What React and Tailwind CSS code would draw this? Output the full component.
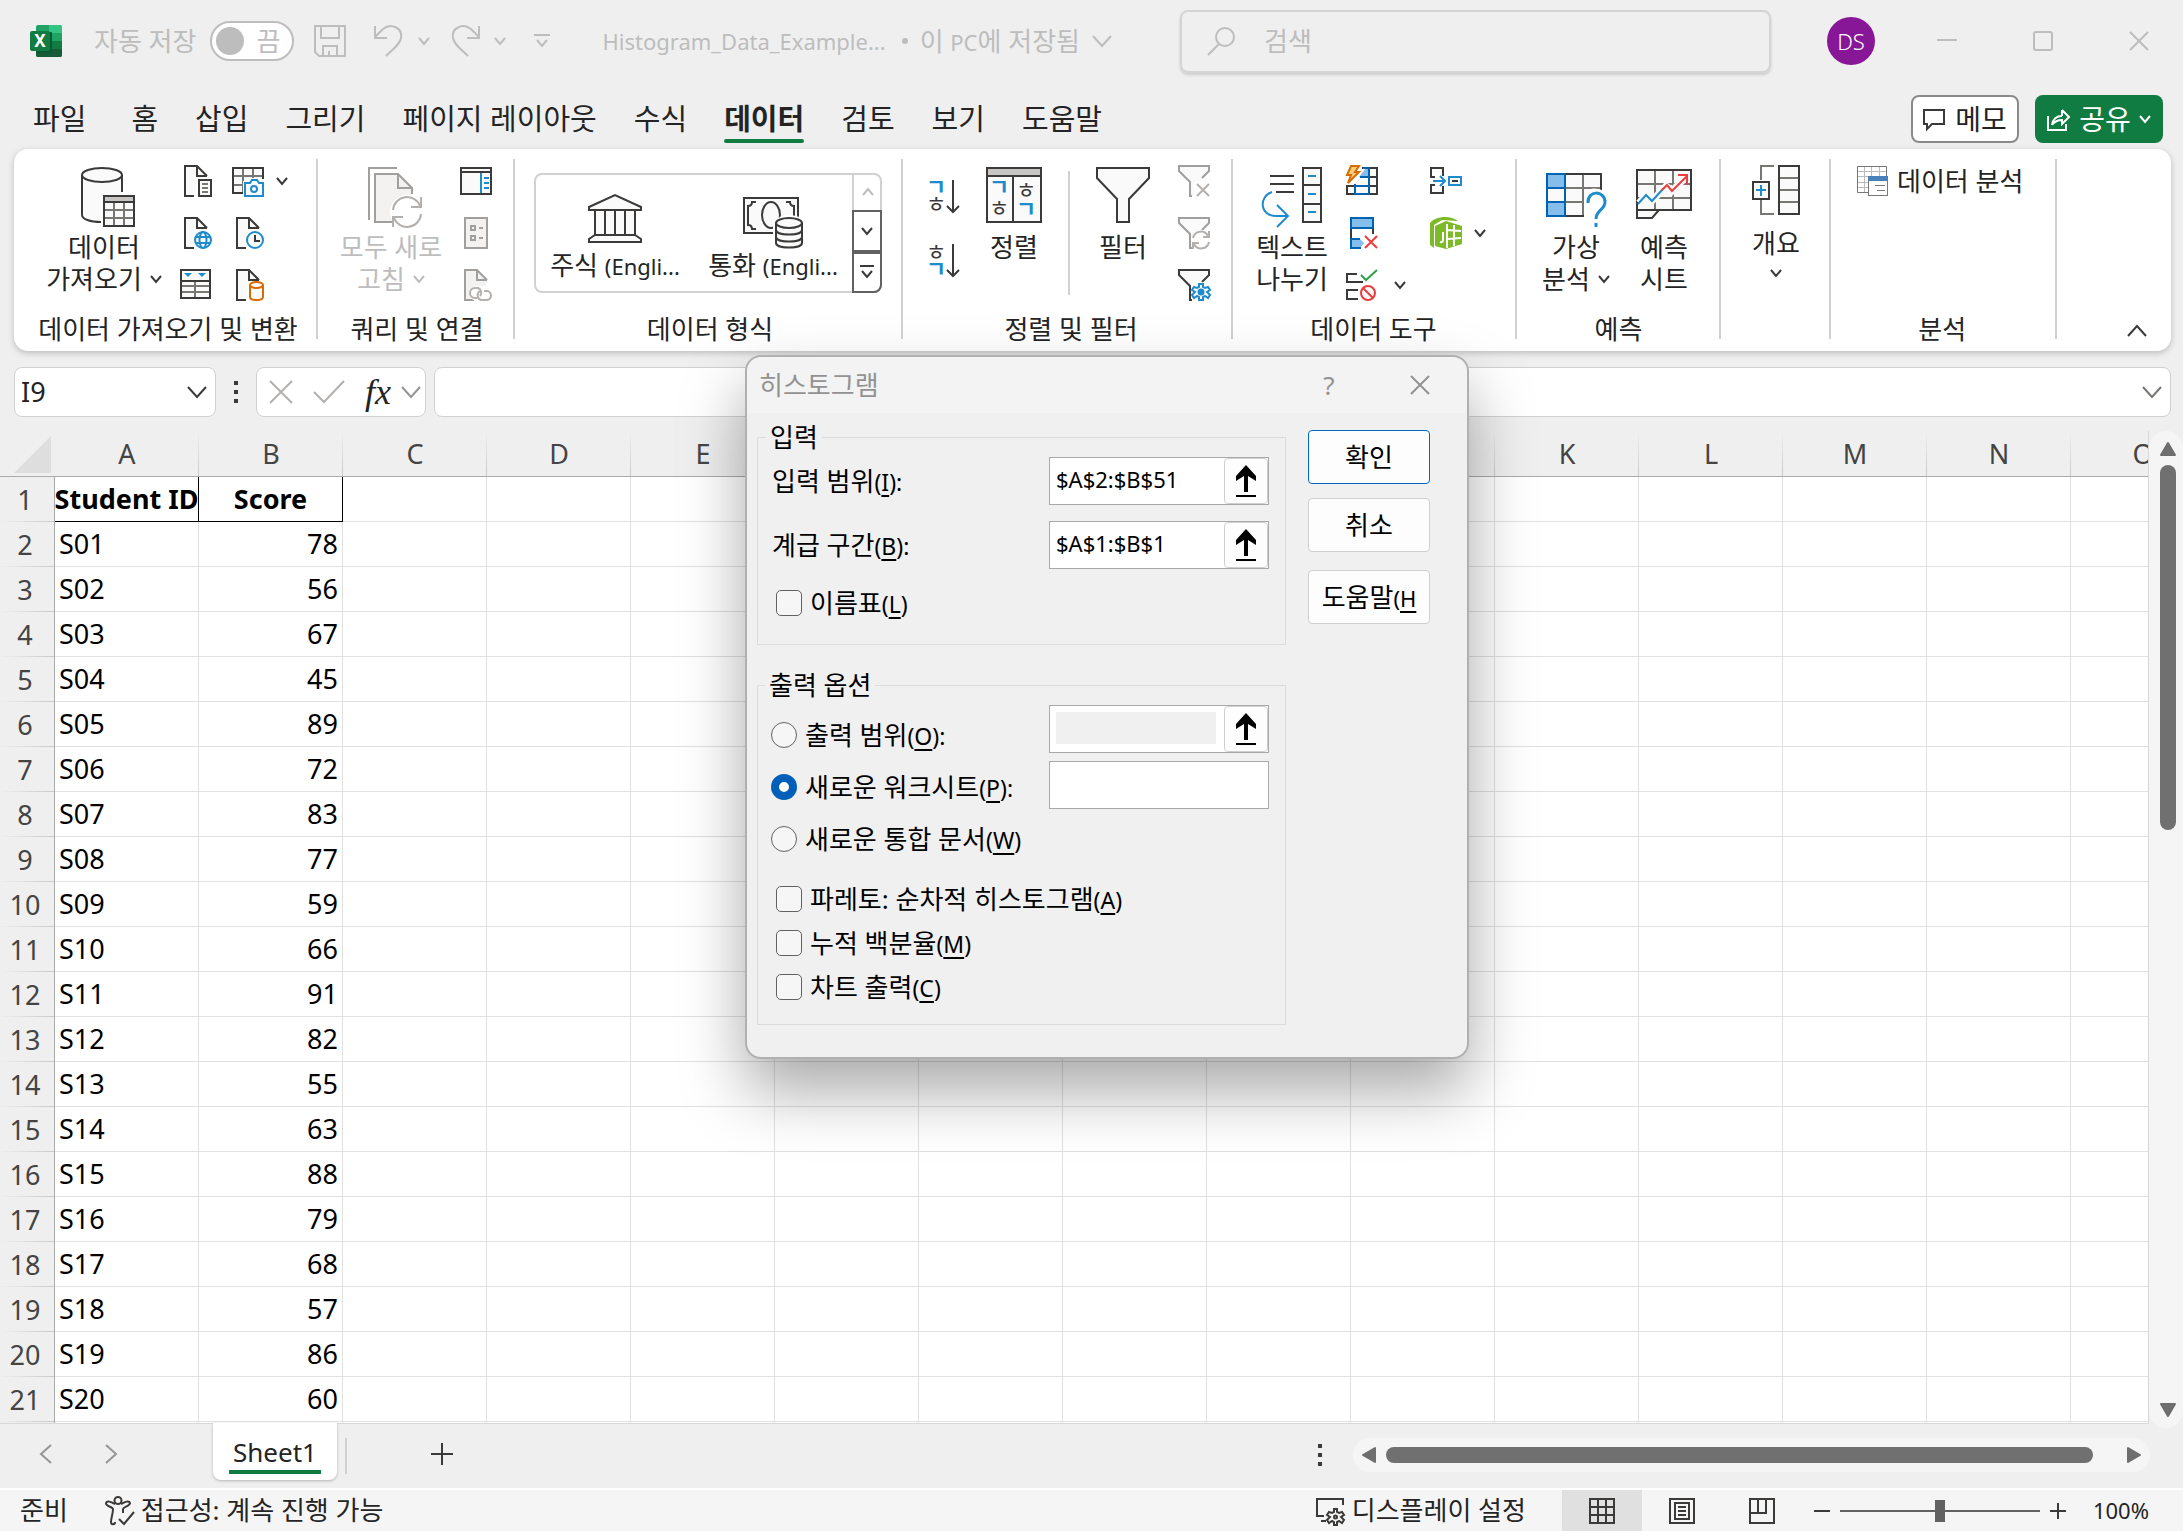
import React from 'react';

const INK = '#3b3a39';
const GREY = '#797774';
const BLUE = '#1e8bcd';
const OFF = '#a19f9d';
const PALE = '#fafafa';

function Svg({ w = 32, h = 32, stroke = INK, sw = 2, className = '', children }) {
  return (
    <svg
      width={w}
      height={h}
      viewBox={`0 0 ${w} ${h}`}
      fill="none"
      stroke={stroke}
      strokeWidth={sw}
      className={`shrink-0 overflow-visible ${className}`}
      aria-hidden="true"
    >
      {children}
    </svg>
  );
}

function Chevron({ w = 12, h = 8, stroke = INK, sw = 2, dir = 'down', className = '' }) {
  const d = {
    down: `M1 1L${w / 2} ${h - 1}L${w - 1} 1`,
    up: `M1 ${h - 1}L${w / 2} 1L${w - 1} ${h - 1}`,
    left: `M${w - 1} 1L1 ${h / 2}L${w - 1} ${h - 1}`,
    right: `M1 1L${w - 1} ${h / 2}L1 ${h - 1}`,
  }[dir];
  return (
    <Svg w={w} h={h} stroke={stroke} sw={sw} className={className}>
      <path d={d} />
    </Svg>
  );
}

const Latin = ({ children }) => <span className="text-[22px]">{children}</span>;

/* ---------- ribbon icons ---------- */

const GetDataIcon = () => (
  <Svg w={54} h={60} className="ml-2">
    <path d="M1 8V48C1 52 9 55 20 55V30H41V8" fill={PALE} stroke="none" />
    <path d="M1 8V48C1 52 9 55 20 55M41 8V25" />
    <ellipse cx="21" cy="8" rx="20" ry="7" fill={PALE} />
    <rect x="23" y="29" width="30" height="30" fill={PALE} />
    <rect x="24" y="30" width="28" height="5" fill="#c8c6c4" stroke="none" />
    <path d="M33 36V58M43 36V58M24 43H52M24 51H52" stroke={GREY} />
    <path d="M23 35H53" />
    <rect x="23" y="29" width="30" height="30" />
  </Svg>
);

function DocIcon({ children, stroke = INK, fill = PALE, body = 'M14 31H5V1H17L27 11' }) {
  return (
    <Svg stroke={stroke}>
      <path d="M5 1H17L27 11V14L14 31H5Z" fill={fill} stroke="none" />
      <path d={body} />
      <path d="M17 1V11H27" />
      {children}
    </Svg>
  );
}

const DocTextIcon = () => (
  <DocIcon>
    <rect x="16" y="13" width="16" height="19" fill="#fff" stroke="none" />
    <rect x="19" y="15" width="12" height="16" fill={PALE} />
    <path d="M22 19H28M22 23H28M22 27H28" stroke={GREY} />
  </DocIcon>
);
const DocWebIcon = () => (
  <DocIcon>
    <circle cx="23" cy="23" r="10" fill="#fff" stroke="none" />
    <g stroke={BLUE}>
      <circle cx="23" cy="23" r="8" fill={PALE} />
      <ellipse cx="23" cy="23" rx="3.5" ry="8" />
      <path d="M15 20H31M15 26H31" />
    </g>
  </DocIcon>
);
const DocClockIcon = () => (
  <DocIcon>
    <circle cx="23" cy="23" r="10" fill="#fff" stroke="none" />
    <circle cx="23" cy="23" r="8" fill={PALE} stroke={BLUE} />
    <path d="M23 18V24H28" />
  </DocIcon>
);
const DocDbIcon = () => (
  <DocIcon>
    <rect x="15" y="12" width="17" height="20" fill="#fff" stroke="none" />
    <g stroke="#d96b00">
      <path d="M18 16V28C18 32 31 32 31 28V16" fill={PALE} />
      <ellipse cx="24.5" cy="16" rx="6.5" ry="3" fill={PALE} />
    </g>
  </DocIcon>
);
const TableCameraIcon = () => (
  <Svg>
    <path d="M1 3H31V28H1Z" fill={PALE} stroke="none" />
    <path d="M2 11H30M2 20H14M11 4V28M21 4V18" stroke={GREY} />
    <path d="M12 28H1V3H31V14" />
    <path d="M11 16H17V13H28V16H32V32H11Z" fill="#fff" stroke="none" />
    <path d="M13 18H18L20 15H25L27 18H31V31H13Z" fill={PALE} stroke={BLUE} />
    <circle cx="22" cy="24" r="3" stroke={BLUE} />
  </Svg>
);
const TableFilterIcon = () => (
  <Svg>
    <rect x="1" y="1" width="29" height="28" fill={PALE} />
    <path d="M2 17H29M2 23H29M15 12V28" stroke={GREY} />
    <path d="M1 12H30" />
    <path d="M4 4H12L8 8ZM18 4H26L22 8Z" fill={BLUE} stroke="none" />
  </Svg>
);
const RefreshAllIcon = () => (
  <Svg w={54} h={60} stroke={OFF} className="ml-2">
    <path d="M29 1H1V53" />
    <path d="M7 7H30L44 21V55H7Z" fill="#f3f2f1" stroke="none" />
    <path d="M27 55H7V7H30L44 21V27" />
    <path d="M30 7V21H44" />
    <circle cx="39" cy="45" r="17" fill="#fff" stroke="none" />
    <g stroke="#b3b0ad">
      <path d="M25 43A14 14 0 0 1 52 39M53 47A14 14 0 0 1 26 51" />
      <path d="M53 30V40H43M25 60V50H35" />
    </g>
  </Svg>
);
const PaneIcon = () => (
  <Svg>
    <rect x="1" y="3" width="30" height="26" fill={PALE} />
    <path d="M1 7H31" />
    <path d="M21 8V28M24 13H29M24 18H29M24 23H29" stroke={BLUE} />
  </Svg>
);
const PropsIcon = () => (
  <Svg stroke={OFF}>
    <rect x="5" y="1" width="22" height="30" fill="#f3f2f1" />
    <rect x="11" y="9" width="4" height="4" />
    <rect x="11" y="19" width="4" height="4" />
    <path d="M19 11H23M19 21H23" />
  </Svg>
);
const LinksIcon = () => (
  <DocIcon stroke={OFF} fill="#f3f2f1">
    <rect x="10" y="17" width="22" height="15" rx="7" fill="#fff" stroke="none" />
    <path d="M17 29H15A5 5 0 0 1 15 19H18A5 5 0 0 1 20 27M24 22H26A4 4 0 0 1 27 31H21A5 5 0 0 1 20 22" stroke="#b3b0ad" />
  </DocIcon>
);
const BankIcon = () => (
  <Svg w={54} h={50}>
    <path d="M1 14L27 2L53 14V17H1Z" fill={PALE} />
    <path d="M7 18V42H47V18" fill={PALE} />
    <path d="M17 18V42M27 18V42M37 18V42" />
    <path d="M7 42H47L53 46V49H1V46Z" fill={PALE} />
  </Svg>
);
const MoneyIcon = () => (
  <Svg w={60} h={52}>
    <rect x="1" y="1" width="54" height="35" fill={PALE} />
    <path d="M13 5H9Q9 9 5 9V28Q9 28 9 32H13M43 5H47Q47 9 51 9V20" />
    <ellipse cx="28" cy="18" rx="9" ry="13" />
    <path d="M30 24Q38 18 46 18Q56 18 60 24V52H30Z" fill="#fff" stroke="none" />
    <path d="M33 26V46C33 52 59 52 59 46V26" fill={PALE} />
    <ellipse cx="46" cy="26" rx="13" ry="5" fill={PALE} />
    <path d="M33 33C33 39 59 39 59 33M33 40C33 46 59 46 59 40" />
  </Svg>
);

function Jamo({ x, y, blue, children }) {
  return (
    <text
      x={x}
      y={y}
      fontSize="22"
      fill={blue ? BLUE : INK}
      stroke="none"
      fontFamily='"Noto Sans CJK KR", sans-serif'
      fontWeight={blue ? 700 : 400}
    >
      {children}
    </text>
  );
}
const SortAscIcon = () => (
  <Svg w={34} h={40}>
    <Jamo x={-2} y={20} blue>ㄱ</Jamo>
    <Jamo x={-2} y={37}>ㅎ</Jamo>
    <path d="M25 5V37M19 31L25 37L31 31" />
  </Svg>
);
const SortDescIcon = () => (
  <Svg w={34} h={40}>
    <Jamo x={-2} y={21}>ㅎ</Jamo>
    <Jamo x={-2} y={38} blue>ㄱ</Jamo>
    <path d="M25 5V37M19 31L25 37L31 31" />
  </Svg>
);
const SortIcon = () => (
  <Svg w={56} h={56}>
    <rect x="1" y="1" width="54" height="54" fill={PALE} />
    <rect x="2" y="2" width="52" height="6" fill="#c8c6c4" stroke="none" />
    <path d="M1 9H55M27 9V55" />
    <Jamo x={3} y={28} blue>ㄱ</Jamo>
    <Jamo x={3} y={49}>ㅎ</Jamo>
    <Jamo x={30} y={31}>ㅎ</Jamo>
    <Jamo x={30} y={50} blue>ㄱ</Jamo>
  </Svg>
);
const FilterIcon = () => (
  <Svg w={54} h={56}>
    <path d="M1 1H53V11L33 32V55H21V32L1 11Z" fill={PALE} />
  </Svg>
);
function SmallFilter({ stroke = INK, children }) {
  return (
    <Svg stroke={stroke}>
      <path d="M1 1H31V6L20 17V31H12V17L1 6Z" fill={PALE} stroke="none" />
      <path d="M14 31H12V17L1 6V1H31V6L24 13" />
      {children}
    </Svg>
  );
}
const FilterClearIcon = () => (
  <SmallFilter stroke={OFF}>
    <path d="M16 17H32V32H16Z" fill="#fff" stroke="none" />
    <path d="M19 19L31 31M31 19L19 31" stroke="#b3b0ad" />
  </SmallFilter>
);
const FilterReapplyIcon = () => (
  <SmallFilter stroke={OFF}>
    <circle cx="23" cy="23" r="10" fill="#fff" stroke="none" />
    <path d="M15 21A8 8 0 0 1 30 19M31 25A8 8 0 0 1 16 27M31 14V20H25M15 32V26H21" stroke="#b3b0ad" />
  </SmallFilter>
);
const FilterAdvIcon = () => (
  <SmallFilter>
    <circle cx="23" cy="23" r="10" fill="#fff" stroke="none" />
    <g stroke={BLUE}>
      <path d="M21 15H25V18L27 19L30 18L32 21L29 23L32 26L30 29L27 27L25 28V31H21V28L19 27L16 29L14 26L17 23L14 21L16 18L19 19L21 18Z" fill={PALE} />
      <circle cx="23" cy="23" r="2.5" fill={BLUE} />
    </g>
  </SmallFilter>
);
const TextColsIcon = () => (
  <Svg w={60} h={60}>
    <path d="M8 9H32M8 17H32M14 25H32" />
    <path d="M41 1H59V55H41ZM41 18H59M41 37H59" fill={PALE} />
    <path d="M46 9H54M46 27H54M46 45H54" stroke={BLUE} />
    <path d="M10 25C-3 29 -3 49 14 49H26M15 38L26 49L15 60" stroke={BLUE} />
  </Svg>
);
const FlashFillIcon = () => (
  <Svg>
    <path d="M16 3H31V29H1V21H31M23 3V29M16 12H31" fill="none" />
    <path d="M9 29V18L18 3H23V29Z" fill={PALE} stroke="none" />
    <path d="M13 12L20 3H23V12Z" fill="#83beec" stroke="none" />
    <path d="M9 19V29H23V3H18M9 21H23M14 12H23" stroke="#0063b1" />
    <path d="M5 1H13L9 7H13L2 18L5 10H1Z" fill="#ffcd80" stroke="#d96b00" />
  </Svg>
);
const RemoveDupIcon = () => (
  <Svg>
    <path d="M5 11V22M27 11V17" />
    <rect x="5" y="1" width="22" height="10" fill="#83beec" stroke="#0063b1" />
    <path d="M14 31H5V22H14L18 26Z" fill="#83beec" stroke="none" />
    <path d="M15 31H5V22H14" stroke="#0063b1" />
    <path d="M19 19L31 31M31 19L19 31" stroke="#e93e3e" />
  </Svg>
);
const ValidationIcon = () => (
  <Svg>
    <path d="M11 5H1V13H17M12 21H1V30H12" />
    <path d="M15 6L20 11L31 1" stroke="#2fa04e" />
    <circle cx="22" cy="24" r="7" stroke="#e93e3e" fill={PALE} />
    <path d="M17 19L27 29" stroke="#e93e3e" />
  </Svg>
);
const ConsolidateIcon = () => (
  <Svg>
    <path d="M13 11V3H1V12H5M5 20H1V28H13V21" />
    <path d="M3 16H15M10 11L15 16L10 21" stroke={BLUE} />
    <rect x="19" y="12" width="12" height="8" stroke={BLUE} fill={PALE} />
    <path d="M22 16H28" />
  </Svg>
);
const DataModelIcon = () => (
  <Svg>
    <path d="M0 6C6 -1 20 -2 28 4L12 3L4 8V31L0 28Z" fill="#7dba28" stroke="none" />
    <path d="M5 9L16 4L32 9V27L16 32L5 29Z" fill="#7dba28" stroke="none" />
    <path d="M17 7V31M17 13L31 14M17 22L31 21M24 8V29" stroke="#fff" />
    <path d="M13 15V23Q13 26 10 25" stroke="#fff" />
  </Svg>
);
const WhatIfIcon = () => (
  <Svg w={60} h={60}>
    <rect x="1" y="7" width="54" height="42" fill={PALE} />
    <path d="M20 21H54M20 35H42M37 8V48" stroke={GREY} />
    <path d="M1 7H19V21H1ZM1 35H19V49H1Z" fill="#83beec" />
    <path d="M1 7H19V49H1ZM1 21H19M1 35H19" stroke="#0063b1" />
    <path d="M38 60V27Q44 20 52 22L60 24V60Z" fill="#fff" stroke="none" />
    <path d="M42 36C41 23 59 23 59 35C59 43 50 43 50 52M50 56V60" stroke={BLUE} strokeWidth="3" />
  </Svg>
);
const ForecastIcon = () => (
  <Svg w={56} h={54}>
    <path d="M1 43V51H16L23 43" fill={PALE} />
    <rect x="1" y="3" width="54" height="40" fill={PALE} />
    <path d="M19 4V42M37 4V42M2 17H54M2 31H54" stroke={GREY} />
    <path d="M3 36L10 28L16 34L30 19L36 24L50 10" stroke={PALE} strokeWidth="7" />
    <path d="M2 37L10 28L16 34L27 22" stroke={BLUE} />
    <path d="M26 23L31 18L36 24L51 9M42 8H51V18" stroke="#e93e3e" />
  </Svg>
);
const OutlineIcon = () => (
  <Svg w={48} h={52}>
    <path d="M22 1H9V15M9 35V49H22" stroke={GREY} />
    <rect x="27" y="1" width="20" height="48" fill={PALE} />
    <path d="M28 13H46M28 25H46M28 37H46" stroke={GREY} />
    <rect x="1" y="17" width="16" height="17" fill={PALE} />
    <path d="M4 25H14M9 20V31" stroke={BLUE} />
  </Svg>
);
const AnalysisIcon = () => (
  <Svg sw={1}>
    <path d="M11 27.5H.5V1.5H29.5V11" stroke={GREY} />
    <path d="M1 6.5H29M1 11.5H14M1 17.5H11M1 22.5H11M7.500 2V27M14.500 2V11M22.500 2V11" stroke="#bbb" />
    <rect x="11.500" y="11.500" width="19" height="19" fill="#fff" stroke={GREY} />
    <rect x="11" y="11" width="20" height="5" fill="#4a80ba" stroke="none" />
    <path d="M18 20.500H28M20 25.500H28" stroke={GREY} />
  </Svg>
);

/* ---------- ribbon building blocks ---------- */

function Group({ label, className = '', children }) {
  return (
    <section
      aria-label={label}
      className={`flex shrink-0 flex-col border-r-2 border-[#d1d1d1] ${className}`}
    >
      <div className="flex h-40 items-start">{children}</div>
      <div className="-mx-8 h-5 pl-1 text-center leading-5 whitespace-nowrap">{label}</div>
    </section>
  );
}

function Big({ icon, lines, arrow, off, className = '' }) {
  return (
    <button
      className={`flex shrink-0 flex-col items-center pt-2 leading-8 whitespace-nowrap ${off ? 'text-[#bdbdbd]' : ''} ${className}`}
    >
      <span className="flex h-[60px] items-start">{icon}</span>
      <span className="mt-1 flex flex-col items-center">
        {lines.map((line, i) => (
          <span key={line} className="flex items-center gap-2">
            {line}
            {arrow && i === lines.length - 1 && <Chevron stroke={off ? '#bdbdbd' : INK} />}
          </span>
        ))}
      </span>
    </button>
  );
}

function Small({ icon, name, arrow = '', off }) {
  return (
    <button aria-label={name} disabled={off} className="flex h-11 items-center">
      {icon}
      {arrow && <Chevron className={arrow} />}
    </button>
  );
}

const Stack = ({ className = '', children }) => (
  <div className={`flex shrink-0 flex-col items-start gap-2 ${className}`}>{children}</div>
);

function Ribbon() {
  return (
    <div className="mx-3.5 mr-3 flex rounded-[14px] bg-white pt-2.5 pb-3 text-[26px] text-[#242424] shadow-[0_2px_6px_rgba(0,0,0,0.22)]">
      <Group label="데이터 가져오기 및 변환" className="pr-7 pl-[30px]">
        <Big className="w-[120px]" icon={<GetDataIcon />} lines={['데이터', '가져오기']} arrow />
        <Stack className="ml-4">
          <Small name="텍스트/CSV에서" icon={<DocTextIcon />} />
          <Small name="웹" icon={<DocWebIcon />} />
          <Small name="테이블/범위에서" icon={<TableFilterIcon />} />
        </Stack>
        <Stack className="ml-5">
          <Small name="그림에서" icon={<TableCameraIcon />} arrow="ml-3" />
          <Small name="최근에 사용한 원본" icon={<DocClockIcon />} />
          <Small name="기존 연결" icon={<DocDbIcon />} />
        </Stack>
      </Group>

      <Group label="쿼리 및 연결" className="pr-[21px] pl-5">
        <Big className="w-[106px]" icon={<RefreshAllIcon />} lines={['모두 새로', '고침']} arrow off />
        <Stack className="ml-4">
          <Small name="쿼리 및 연결" icon={<PaneIcon />} />
          <Small name="속성" icon={<PropsIcon />} off />
          <Small name="연결 편집" icon={<LinksIcon />} off />
        </Stack>
      </Group>

      <Group label="데이터 형식" className="pr-[19px] pl-[19px]">
        <div className="mt-3.5 flex h-[120px] w-[348px] rounded-lg border-2 border-[#d1d1d1]">
          <button className="flex flex-1 flex-col items-center pt-[18px] leading-8 whitespace-nowrap">
            <BankIcon />
            <span className="mt-1.5">
              주식 <Latin>(Engli...</Latin>
            </span>
          </button>
          <button className="flex flex-1 flex-col items-center pt-[22px] leading-8 whitespace-nowrap">
            <MoneyIcon />
            <span>
              통화 <Latin>(Engli...</Latin>
            </span>
          </button>
          <div className="-my-0.5 -mr-0.5 flex w-[30px] flex-col">
            <button aria-label="이전" className="grid flex-1 place-items-center border-l-2 border-[#d1d1d1]">
              <Chevron dir="up" stroke="#bdbdbd" />
            </button>
            <button aria-label="다음" className="grid flex-1 place-items-center border-2 border-[#616161]">
              <Chevron />
            </button>
            <button aria-label="자세히" className="grid flex-1 place-items-center rounded-br-lg border-2 border-[#616161]">
              <Svg w={14} h={14}>
                <path d="M0 1H14M2 6L7 12L12 6" />
              </Svg>
            </button>
          </div>
        </div>
      </Group>

      <Group label="정렬 및 필터" className="pr-[21px] pl-[25px]">
        <div className="flex w-8 flex-col gap-6 pt-4">
          <button aria-label="오름차순 정렬" className="flex h-10"><SortAscIcon /></button>
          <button aria-label="내림차순 정렬" className="flex h-10"><SortDescIcon /></button>
        </div>
        <Big className="ml-[26px] w-14" icon={<SortIcon />} lines={['정렬']} />
        <div className="mt-3 ml-[26px] h-[124px] w-0.5 bg-[#d1d1d1]" />
        <Big className="ml-[26px] w-[54px]" icon={<FilterIcon />} lines={['필터']} />
        <Stack className="ml-7">
          <Small name="지우기" icon={<FilterClearIcon />} off />
          <Small name="다시 적용" icon={<FilterReapplyIcon />} off />
          <Small name="고급" icon={<FilterAdvIcon />} />
        </Stack>
      </Group>

      <Group label="데이터 도구" className="pr-[29px] pl-6">
        <Big className="w-[70px]" icon={<TextColsIcon />} lines={['텍스트', '나누기']} />
        <Stack className="ml-[19px]">
          <Small name="빠른 채우기" icon={<FlashFillIcon />} />
          <Small name="중복된 항목 제거" icon={<RemoveDupIcon />} />
          <Small name="데이터 유효성 검사" icon={<ValidationIcon />} arrow="ml-4" />
        </Stack>
        <Stack className="ml-6">
          <Small name="통합" icon={<ConsolidateIcon />} />
          <Small name="데이터 모델" icon={<DataModelIcon />} arrow="ml-3" />
        </Stack>
      </Group>

      <Group label="예측" className="pr-[27px] pl-6">
        <Big className="w-[70px]" icon={<WhatIfIcon />} lines={['가상', '분석']} arrow />
        <Big className="ml-[25px] w-14" icon={<ForecastIcon />} lines={['예측', '시트']} />
      </Group>

      <Group label="" className="pr-[29px] pl-[31px]">
        <button className="flex w-12 flex-col items-center pt-1.5 leading-8 whitespace-nowrap">
          <OutlineIcon />
          <span className="mt-2.5">개요</span>
          <Chevron className="mt-2.5" />
        </button>
      </Group>

      <Group label="분석" className="pr-8 pl-[26px]">
        <button className="flex h-11 items-center gap-2 whitespace-nowrap">
          <AnalysisIcon />
          데이터 분석
        </button>
      </Group>

      <button aria-label="리본 메뉴 축소" className="mr-6 mb-0.5 ml-auto self-end">
        <Chevron w={20} h={12} dir="up" />
      </button>
    </div>
  );
}

/* ---------- window chrome ---------- */

function TitleBar() {
  const faint = '#bdbdbd';
  return (
    <header className="flex h-[82px] shrink-0 items-center pl-[30px] text-[26px] whitespace-nowrap text-[#bdbdbd]">
      <Svg>
        <g stroke="none">
          <rect x="6" y="0" width="26" height="32" rx="2" fill="#21a366" />
          <path d="M19 0H30Q32 0 32 2V8H19Z" fill="#33c481" />
          <path d="M6 16H19V24H6Z" fill="#185c37" />
          <path d="M19 16H32V24H19Z" fill="#107c41" />
          <path d="M6 24H32V30Q32 32 30 32H8Q6 32 6 30Z" fill="#185c37" />
          <rect x="6" y="7" width="16" height="21" rx="1" fill="#0b5b30" />
          <rect x="0" y="6" width="20" height="20" rx="2" fill="#107c41" />
          <text x="10" y="22" fontSize="17" fontWeight="700" textAnchor="middle" fill="#fff">
            X
          </text>
        </g>
      </Svg>
      <span id="autosave" className="ml-8">자동 저장</span>
      <button
        role="switch"
        aria-checked="false"
        aria-labelledby="autosave"
        className="ml-3.5 flex h-10 w-[84px] items-center gap-3 rounded-full border-2 border-[#bdbdbd] bg-white pl-1"
      >
        <span className="size-7 rounded-full bg-[#bdbdbd]" />
        끔
      </button>
      <button aria-label="저장" className="ml-5">
        <Svg stroke={faint}>
          <path d="M1 1H31V31H5L1 27ZM7 1V13H25V1M9 31V21H23V31M15 31V26" />
        </Svg>
      </button>
      <button aria-label="실행 취소" className="ml-7 flex items-center gap-3.5">
        <Svg w={30} stroke={faint}>
          <path d="M1 1V13H13M1 12L9 4C18 -3 29 4 27 13C26 20 18 25 12 31" />
        </Svg>
        <Chevron stroke={faint} />
      </button>
      <button aria-label="다시 실행" className="ml-5 flex items-center gap-3.5">
        <Svg w={30} stroke={faint}>
          <path d="M29 1V13H17M29 12L21 4C12 -3 1 4 3 13C4 20 12 25 18 31" />
        </Svg>
        <Chevron stroke={faint} />
      </button>
      <button aria-label="빠른 실행 도구 모음 사용자 지정" className="ml-7">
        <Svg w={16} h={14} stroke={faint}>
          <path d="M0 1H16M3 6L8 12L13 6" />
        </Svg>
      </button>
      <button className="ml-[52px] flex items-center gap-3">
        <span className="text-[22px]">Histogram_Data_Example...</span>
        <span className="ml-1 size-1.5 rounded-full bg-[#bdbdbd]" />
        <span>
          이 <Latin>PC</Latin>에 저장됨
        </span>
        <Chevron w={20} h={12} stroke={faint} />
      </button>
      <label className="ml-auto flex h-[63px] w-[591px] items-center gap-7 rounded-lg border-2 border-[#d4d4d4] pl-6 shadow-[0_2px_3px_rgba(0,0,0,0.15)]">
        <Svg w={30} h={30} stroke={faint}>
          <circle cx="19" cy="11" r="9" />
          <path d="M13 18L2 29" />
        </Svg>
        <input
          aria-label="검색"
          placeholder="검색"
          className="w-full bg-transparent outline-none placeholder:text-[#bdbdbd]"
        />
      </label>
      <button className="ml-14 grid size-12 place-items-center rounded-full bg-[#881798] text-[22px] font-light text-white">
        DS
      </button>
      <button aria-label="최소화" className="ml-[62px]">
        <Svg w={20} h={20} stroke={faint}><path d="M0 9H20" /></Svg>
      </button>
      <button aria-label="최대화" className="ml-[76px]">
        <Svg w={20} h={20} stroke={faint}><rect x="1" y="1" width="18" height="18" rx="2" /></Svg>
      </button>
      <button aria-label="닫기" className="mr-[34px] ml-[76px]">
        <Svg w={20} h={20} stroke={faint}><path d="M1 1L19 19M19 1L1 19" /></Svg>
      </button>
    </header>
  );
}

const TABS = ['파일', '홈', '삽입', '그리기', '페이지 레이아웃', '수식', '데이터', '검토', '보기', '도움말'];

function TabRow() {
  return (
    <nav className="flex h-[67px] shrink-0 items-end pr-5 pb-1.5 pl-[33px] text-[29px] whitespace-nowrap text-[#242424]">
      <div className="flex gap-[37px]">
        {TABS.map((tab) => (
          <button
            key={tab}
            className={
              tab === '데이터'
                ? 'relative h-12 font-bold after:absolute after:inset-x-0 after:bottom-0 after:h-1 after:rounded-sm after:bg-[#107c41]'
                : 'h-12 first:mr-2'
            }
          >
            {tab}
          </button>
        ))}
      </div>
      <button className="mr-4 ml-auto flex h-12 w-[108px] items-center justify-center gap-2.5 rounded-lg border-2 border-[#8a8a8a] bg-white text-[28px]">
        <Svg w={22} h={22}>
          <path d="M1 2H21V16H9L4 21V16H1Z" />
        </Svg>
        메모
      </button>
      <button className="flex h-12 w-32 items-center justify-center gap-2 rounded-lg bg-[#107c41] text-[28px] text-white">
        <Svg w={24} h={24} stroke="#fff">
          <path d="M1 9V23H19V17M5 18C6 12 9 9 15 9M15 3L22 10L15 17V13C11 13 8 14 5 18M15 3V9" />
        </Svg>
        공유
        <Chevron stroke="#fff" />
      </button>
    </nav>
  );
}

const Dots = () => (
  <Svg w={4} h={22}>
    <path d="M2 0V4M2 9V13M2 18V22" strokeWidth="4" />
  </Svg>
);

function FormulaBar() {
  const box = 'flex h-[50px] items-center rounded-lg border border-[#d1d1d1] bg-white';
  return (
    <div className="flex h-20 shrink-0 items-start pt-4 pr-3 pl-3.5 text-[27px] text-[#242424]">
      <div className={`${box} w-[202px] pr-2 pl-1.5`}>
        <input aria-label="이름 상자" defaultValue="I9" className="w-full min-w-0 outline-none" />
        <button aria-label="이름 목록">
          <Chevron w={20} h={12} />
        </button>
      </div>
      <div className="mt-3.5 ml-[18px]"><Dots /></div>
      <div className={`${box} ml-[18px] w-[170px] pr-1 pl-3`}>
        <button aria-label="취소">
          <Svg w={24} h={24} stroke="#b3b0ad"><path d="M1 1L23 23M23 1L1 23" /></Svg>
        </button>
        <button aria-label="입력" className="ml-5">
          <Svg w={32} h={24} stroke="#b3b0ad"><path d="M1 12L11 22L31 1" /></Svg>
        </button>
        <button
          aria-label="함수 삽입"
          className="mr-auto ml-5 font-['Liberation_Serif',serif] text-[36px] leading-9 italic"
        >
          fx
        </button>
        <Chevron w={20} h={12} stroke="#979593" />
      </div>
      <div className={`${box} ml-2 min-w-0 flex-1 pr-2 pl-3`}>
        <input aria-label="수식 입력줄" className="w-full min-w-0 outline-none" />
        <button aria-label="수식 입력줄 확장">
          <Chevron w={20} h={12} stroke={GREY} />
        </button>
      </div>
    </div>
  );
}

/* ---------- worksheet ---------- */

const COLUMNS = 'ABCDEFGHIJKLMNO'.split('');
const SCORES = [78, 56, 67, 45, 89, 72, 83, 77, 59, 66, 91, 82, 55, 63, 88, 79, 68, 57, 86, 60];
const ROWS = SCORES.map((score, i) => ({
  n: i + 2,
  id: `S${String(i + 1).padStart(2, '0')}`,
  score,
}));

const rowHead =
  'h-[45px] border-r border-[#ababab] bg-linear-to-r from-transparent to-[#c8c8c8] bg-[length:100%_1px] bg-bottom bg-no-repeat pr-1 text-center font-normal text-[#444]';
const cell = 'border-r border-b border-[#e0e0e0] bg-white px-1';

function Sheet() {
  return (
    <div className="flex min-h-0 flex-1">
      <div className="min-w-0 flex-1 overflow-hidden border-r border-b border-[#d8d8d8]">
        <table className="w-[2215px] table-fixed border-separate border-spacing-0 text-[27px] leading-8 text-black">
          <colgroup>
            <col className="w-[55px]" />
            {COLUMNS.map((c) => (
              <col key={c} className="w-36" />
            ))}
          </colgroup>
          <thead>
            <tr>
              <th className="h-[46px] border-b border-[#ababab] p-0 align-bottom">
                <Svg w={38} h={38} className="mb-0.5 ml-3.5">
                  <path d="M37 0V37H0Z" fill="#dedede" stroke="none" />
                </Svg>
              </th>
              {COLUMNS.map((c) => (
                <th
                  key={c}
                  scope="col"
                  className="border-b border-b-[#ababab] bg-linear-to-b from-transparent to-[#c8c8c8] bg-[length:1px_100%] bg-right bg-no-repeat p-0 font-normal text-[#444]"
                >
                  {c}
                </th>
              ))}
            </tr>
          </thead>
          <tbody>
            <tr>
              <th scope="row" className={rowHead}>1</th>
              <td className="overflow-hidden border-r border-b border-black bg-white p-0">
                <div className="flex justify-center font-bold whitespace-nowrap">Student ID</div>
              </td>
              <td className="border-r border-b border-black bg-white p-0 text-center font-bold">Score</td>
              {COLUMNS.slice(2).map((c) => (
                <td key={c} className={cell} />
              ))}
            </tr>
            {ROWS.map((r) => (
              <tr key={r.n}>
                <th scope="row" className={rowHead}>{r.n}</th>
                <td className={cell}>{r.id}</td>
                <td className={`${cell} text-right`}>{r.score}</td>
                {COLUMNS.slice(2).map((c) => (
                  <td key={c} className={cell} />
                ))}
              </tr>
            ))}
            <tr>
              <th scope="row" className={rowHead} />
              {COLUMNS.map((c) => (
                <td key={c} className={cell} />
              ))}
            </tr>
          </tbody>
        </table>
      </div>
      <div className="-mb-1 flex w-[34px] shrink-0 flex-col items-center rounded-full bg-[#f5f5f5] pt-2.5 pb-2.5 pl-1">
        <button aria-label="위로 스크롤">
          <Svg w={18} h={16}><path d="M9 2L16 14H2Z" fill="#6e6e6e" stroke="#6e6e6e" strokeLinejoin="round" /></Svg>
        </button>
        <div className="mt-2 w-4 flex-[365] rounded-full bg-[#707070]" />
        <div className="flex-[572]" />
        <button aria-label="아래로 스크롤">
          <Svg w={18} h={16}><path d="M9 14L16 2H2Z" fill="#6e6e6e" stroke="#6e6e6e" strokeLinejoin="round" /></Svg>
        </button>
      </div>
    </div>
  );
}

function SheetTabs() {
  return (
    <div className="flex h-16 shrink-0 items-start text-[26px] text-[#242424]">
      <button aria-label="이전 시트" className="mt-5 ml-10 flex">
        <Chevron w={12} h={20} dir="left" stroke="#979593" />
      </button>
      <button aria-label="다음 시트" className="mt-5 ml-[53px] flex">
        <Chevron w={12} h={20} dir="right" stroke="#979593" />
      </button>
      <button className="-mt-px ml-[96px] h-[57px] w-[124px] rounded-b-lg bg-white px-4 shadow-[0_1px_3px_rgba(0,0,0,0.25)]">
        <span className="block border-b-4 border-[#107c41] pt-1 leading-9">Sheet1</span>
      </button>
      <div className="mt-3.5 ml-2 h-9 w-0.5 bg-[#d1d1d1]" />
      <button aria-label="새 시트" className="mt-[19px] ml-[84px]">
        <Svg w={22} h={22}><path d="M0 11H22M11 0V22" /></Svg>
      </button>
      <div className="mt-5 ml-auto"><Dots /></div>
      <div className="mt-3.5 mr-[33px] ml-[31px] flex h-[34px] w-[797px] items-center rounded-full bg-[#f5f5f5] px-2">
        <button aria-label="왼쪽으로 스크롤">
          <Svg w={16} h={18}><path d="M2 9L14 2V16Z" fill="#6e6e6e" stroke="#6e6e6e" strokeLinejoin="round" /></Svg>
        </button>
        <div className="mr-[33px] ml-[9px] h-4 flex-1 rounded-full bg-[#707070]" />
        <button aria-label="오른쪽으로 스크롤">
          <Svg w={16} h={18}><path d="M14 9L2 2V16Z" fill="#6e6e6e" stroke="#6e6e6e" strokeLinejoin="round" /></Svg>
        </button>
      </div>
    </div>
  );
}

function StatusBar() {
  return (
    <footer className="flex h-[43px] shrink-0 items-center border-t-2 border-white bg-[#f5f5f5] text-[26px] whitespace-nowrap text-[#242424]">
      <span className="ml-5">준비</span>
      <button className="ml-[37px] flex items-center gap-1">
        <Svg w={32} h={30}>
          <circle cx="13" cy="4.500" r="3.500" />
          <path d="M10 8C6 6 2 4 1 7C0 10 8 11 8 13C8 18 6 22 6 26C6 29 10 29 10 26M16 8C20 6 24 4 25 7C25 10 18 11 18 13V17" />
          <path d="M14 23L19 28L29 16" />
        </Svg>
        <span>접근성: 계속 진행 가능</span>
      </button>
      <button className="ml-auto flex items-center gap-1.5">
        <Svg w={30} h={30}>
          <path d="M8 20H1V3H27V9M5 25H10" />
          <path d="M18 13H21V16L23 17L26 16L28 19L25 21L28 24L26 27L23 25L21 26V29H18V26L16 25L13 27L11 24L14 21L11 19L13 16L16 17L18 16Z" />
          <circle cx="19.500" cy="21" r="1.500" />
        </Svg>
        디스플레이 설정
      </button>
      <button aria-label="기본" className="ml-9 grid h-full w-20 place-items-center bg-[#e0e0e0]">
        <Svg w={26} h={26}><path d="M1 1H25V25H1ZM1 9H25M1 17H25M9 1V25M17 1V25" /></Svg>
      </button>
      <button aria-label="페이지 레이아웃" className="grid h-full w-20 place-items-center">
        <Svg w={26} h={26}><path d="M1 1H25V25H1ZM6 5H20V21H6ZM9 9H17M9 13H17M9 17H17" /></Svg>
      </button>
      <button aria-label="페이지 나누기 미리 보기" className="grid h-full w-20 place-items-center">
        <Svg w={26} h={26}><path d="M1 1H25V25H1ZM1 15H17V1M9 1V15" /></Svg>
      </button>
      <button aria-label="축소" className="ml-3">
        <Svg w={16} h={16}><path d="M0 8H16" /></Svg>
      </button>
      <input
        type="range"
        aria-label="확대/축소"
        min="10"
        max="190"
        defaultValue="100"
        className="mx-2.5 h-6 w-[200px] appearance-none bg-linear-to-r from-[#616161] to-[#616161] bg-[length:100%_2px] bg-center bg-no-repeat [&::-webkit-slider-thumb]:h-[22px] [&::-webkit-slider-thumb]:w-2.5 [&::-webkit-slider-thumb]:appearance-none [&::-webkit-slider-thumb]:bg-[#616161]"
      />
      <button aria-label="확대">
        <Svg w={16} h={16}><path d="M0 8H16M8 0V16" /></Svg>
      </button>
      <span className="mr-[34px] ml-[27px] text-[22px]">100%</span>
    </footer>
  );
}

/* ---------- histogram dialog ---------- */

const Key = ({ k, after = '' }) => (
  <span className="text-[23px]">
    (<u className="underline-offset-4">{k}</u>){after}
  </span>
);

function RangeBox({ id, label, value, off }) {
  return (
    <div className="flex h-12 w-[220px] border border-[#a9a9ac] bg-white">
      <input
        id={id}
        aria-label={label}
        defaultValue={value}
        disabled={off}
        className="mt-1 mb-2 ml-1.5 w-40 min-w-0 text-[22px] outline-none disabled:mt-1.5 disabled:bg-[#f0f0f0]"
      />
      <button
        aria-label="범위 선택"
        className="ml-auto grid w-11 place-items-center rounded-sm border border-[#d0d0d0] bg-[#fdfdfd]"
      >
        <Svg w={20} h={32} stroke="#000">
          <path d="M10 0L20 11V16L12 11V27H8V11L0 16V11Z" fill="#000" stroke="none" />
          <path d="M0 31H20" />
        </Svg>
      </button>
    </div>
  );
}

const check = 'size-[26px] shrink-0 appearance-none rounded-[5px] border border-[#626262] bg-[#f6f6f6]';
const radio =
  'size-[26px] shrink-0 appearance-none rounded-full border border-[#626262] bg-[#f6f6f6] checked:border-[8px] checked:border-[#005fb8] checked:bg-white';

function HistogramDialog() {
  const action = 'h-[54px] w-[122px] rounded border bg-[#fdfdfd] whitespace-nowrap overflow-hidden';
  return (
    <div
      role="dialog"
      aria-labelledby="dialog-title"
      className="absolute top-[355px] left-[745px] w-[724px] rounded-2xl border-2 border-[#b0b0b0] bg-[#f0f0f0] pb-8 text-[26px] leading-8 text-black shadow-[0_32px_64px_rgba(0,0,0,0.34)]"
    >
      <div className="flex h-14 items-center rounded-t-2xl bg-[#f3f3f3] pr-[37px] pl-3 text-[#929292]">
        <h2 id="dialog-title">히스토그램</h2>
        <button aria-label="도움말" className="ml-auto w-5 text-center">?</button>
        <button aria-label="닫기" className="ml-[71px]">
          <Svg w={20} h={20} stroke="#929292"><path d="M1 1L19 19M19 1L1 19" /></Svg>
        </button>
      </div>
      <div className="flex pr-[37px] pl-2.5 whitespace-nowrap">
        <div className="min-w-0 flex-1 pt-2">
          <fieldset className="border border-[#dcdcdc] pr-4 pb-7 pl-3.5">
            <legend className="-ml-1.5 px-1">입력</legend>
            <div className="mt-1 flex items-center justify-between">
              <label htmlFor="in-range">
                입력 범위<Key k="I" after=":" />
              </label>
              <RangeBox id="in-range" value="$A$2:$B$51" />
            </div>
            <div className="mt-4 flex items-center justify-between">
              <label htmlFor="bin-range">
                계급 구간<Key k="B" after=":" />
              </label>
              <RangeBox id="bin-range" value="$A$1:$B$1" />
            </div>
            <label className="mt-[21px] ml-1 flex h-[26px] items-center gap-2">
              <input type="checkbox" className={check} />
              <span>이름표<Key k="L" /></span>
            </label>
          </fieldset>
          <fieldset className="mt-6 border border-[#dcdcdc] pr-4 pb-[15px] pl-[13px]">
            <legend className="-ml-1.5 px-1">출력 옵션</legend>
            <div className="flex justify-between pt-1">
              <div className="pt-1">
                <label className="flex h-[52px] items-center gap-2">
                  <input type="radio" name="out" className={radio} />
                  <span>출력 범위<Key k="O" after=":" /></span>
                </label>
                <label className="flex h-[52px] items-center gap-2">
                  <input type="radio" name="out" defaultChecked className={radio} />
                  <span>새로운 워크시트<Key k="P" after=":" /></span>
                </label>
                <label className="flex h-[52px] items-center gap-2">
                  <input type="radio" name="out" className={radio} />
                  <span>새로운 통합 문서<Key k="W" /></span>
                </label>
              </div>
              <div className="flex flex-col gap-2">
                <RangeBox id="out-range" label="출력 범위" off />
                <input
                  aria-label="새로운 워크시트 이름"
                  className="h-12 w-[220px] border border-[#a9a9ac] bg-white px-1.5 text-[22px] outline-none"
                />
              </div>
            </div>
            <div className="mt-3 ml-[5px]">
              <label className="flex h-11 items-center gap-2">
                <input type="checkbox" className={check} />
                <span>파레토: 순차적 히스토그램<Key k="A" /></span>
              </label>
              <label className="flex h-11 items-center gap-2">
                <input type="checkbox" className={check} />
                <span>누적 백분율<Key k="M" /></span>
              </label>
              <label className="flex h-11 items-center gap-2">
                <input type="checkbox" className={check} />
                <span>차트 출력<Key k="C" /></span>
              </label>
            </div>
          </fieldset>
        </div>
        <div className="ml-[22px] flex flex-col pt-[17px]">
          <button className={`${action} border-[#0067c0]`}>확인</button>
          <button className={`${action} mt-3.5 border-[#d0d0d0]`}>취소</button>
          <button className={`${action} mt-[18px] border-[#d0d0d0]`}>
            도움말<Latin>(<u className="underline-offset-4">H</u></Latin>
          </button>
        </div>
      </div>
    </div>
  );
}

export default function App() {
  return (
    <div className="relative flex h-screen flex-col overflow-hidden bg-[#efefef] font-['Noto_Sans','Noto_Sans_CJK_KR',sans-serif]">
      <TitleBar />
      <TabRow />
      <Ribbon />
      <FormulaBar />
      <Sheet />
      <SheetTabs />
      <StatusBar />
      <HistogramDialog />
    </div>
  );
}
